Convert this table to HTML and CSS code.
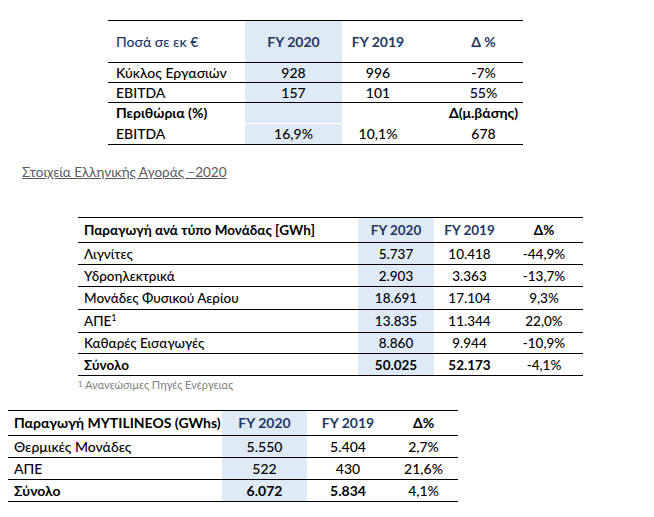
FILE: index.html
```html
<!DOCTYPE html>
<html lang="el">
<head>
<meta charset="utf-8">
<title>Στοιχεία</title>
<link rel="stylesheet" href="styles.css">
</head>
<body>
<div class="page">
  <table class="tbl t1">
    <colgroup>
      <col class="t1-c0"><col class="t1-c1"><col class="t1-c2"><col class="t1-c3">
    </colgroup>
    <tr class="head">
      <td class="lbl navy">Ποσά σε εκ €</td>
      <td class="shade num navy b">FY 2020</td>
      <td class="num navy b">FY 2019</td>
      <td class="num d navy b">Δ %</td>
    </tr>
    <tr class="row r19 line">
      <td class="lbl">Κύκλος Εργασιών</td>
      <td class="shade num">928</td>
      <td class="num">996</td>
      <td class="num d">-7%</td>
    </tr>
    <tr class="row r19 line">
      <td class="lbl">EBITDA</td>
      <td class="shade num">157</td>
      <td class="num">101</td>
      <td class="num d">55%</td>
    </tr>
    <tr class="row line">
      <td class="lbl b">Περιθώρια (%)</td>
      <td class="shade num"></td>
      <td class="num"></td>
      <td class="num d b">Δ(μ.βάσης)</td>
    </tr>
    <tr class="row wline">
      <td class="lbl">EBITDA</td>
      <td class="shade num">16,9%</td>
      <td class="num">10,1%</td>
      <td class="num d">678</td>
    </tr>
  </table>

  <p class="section-title">Στοιχεία Ελληνικής Αγοράς –2020</p>

  <table class="tbl t2">
    <colgroup>
      <col class="t2-c0"><col class="t2-c1"><col class="t2-c2"><col class="t2-c3">
    </colgroup>
    <tr class="head">
      <td class="lbl b">Παραγωγή ανά τύπο Μονάδας [GWh]</td>
      <td class="shade num navy b">FY 2020</td>
      <td class="num navy b">FY 2019</td>
      <td class="num b">Δ%</td>
    </tr>
    <tr class="row line">
      <td class="lbl">Λιγνίτες</td>
      <td class="shade num">5.737</td>
      <td class="num">10.418</td>
      <td class="num">-44,9%</td>
    </tr>
    <tr class="row line">
      <td class="lbl">Υδροηλεκτρικά</td>
      <td class="shade num">2.903</td>
      <td class="num">3.363</td>
      <td class="num">-13,7%</td>
    </tr>
    <tr class="row tall line">
      <td class="lbl">Μονάδες Φυσικού Αερίου</td>
      <td class="shade num">18.691</td>
      <td class="num">17.104</td>
      <td class="num">9,3%</td>
    </tr>
    <tr class="row tall line">
      <td class="lbl">ΑΠΕ<sup class="sup">1</sup></td>
      <td class="shade num">13.835</td>
      <td class="num">11.344</td>
      <td class="num">22,0%</td>
    </tr>
    <tr class="row short line">
      <td class="lbl">Καθαρές Εισαγωγές</td>
      <td class="shade num">8.860</td>
      <td class="num">9.944</td>
      <td class="num">-10,9%</td>
    </tr>
    <tr class="row line">
      <td class="lbl b">Σύνολο</td>
      <td class="shade num b">50.025</td>
      <td class="num b">52.173</td>
      <td class="num">-4,1%</td>
    </tr>
  </table>
  <p class="footnote"><span class="fn-mark">1</span> Ανανεώσιμες Πηγές Ενέργειας</p>

  <table class="tbl t3">
    <colgroup>
      <col class="t3-c0"><col class="t3-c1"><col class="t3-c2"><col class="t3-c3">
    </colgroup>
    <tr class="head">
      <td class="lbl b">Παραγωγή MYTILINEOS (GWhs)</td>
      <td class="shade num navy b">FY 2020</td>
      <td class="num navy b">FY 2019</td>
      <td class="num b">Δ%</td>
    </tr>
    <tr class="row line">
      <td class="lbl">Θερμικές Μονάδες</td>
      <td class="shade num">5.550</td>
      <td class="num">5.404</td>
      <td class="num">2,7%</td>
    </tr>
    <tr class="row line">
      <td class="lbl">ΑΠΕ</td>
      <td class="shade num">522</td>
      <td class="num">430</td>
      <td class="num">21,6%</td>
    </tr>
    <tr class="row line">
      <td class="lbl b">Σύνολο</td>
      <td class="shade num b">6.072</td>
      <td class="num b">5.834</td>
      <td class="num">4,1%</td>
    </tr>
  </table>
</div>
</body>
</html>
```

FILE: styles.css
```css
html, body {
  margin: 0;
  padding: 0;
  background: #ffffff;
}

body {
  font-family: Lato, "Open Sans", "Noto Sans", sans-serif;
  font-size: 14px;
  font-weight: 500;
  color: #000000;
}

.page {
  display: flex;
  flex-direction: column;
  align-items: flex-start;
  padding-top: 20px;
}

.tbl {
  border-collapse: collapse;
  table-layout: fixed;
  border-top: 1px solid #000;
  border-bottom: 1px solid #000;
}

.tbl td {
  padding: 0;
  white-space: nowrap;
  overflow: visible;
  line-height: 16px;
}

.tbl tr.line td {
  border-top: 1px solid #000;
}

.tbl tr.wline td {
  border-top: 1px solid #ffffff;
}

.lbl {
  text-align: left;
  padding-left: 8px !important;
}

.num {
  text-align: center;
}

.b {
  font-weight: 700;
}

.navy {
  color: #1f3864;
}

.shade {
  background: #deeaf6;
}

.sup {
  font-size: 9px;
  vertical-align: 5px;
  line-height: 0;
}

/* Table 1 */
.t1 {
  margin-left: 108px;
  width: 415px;
}
.t1-c0 { width: 137px; }
.t1-c1 { width: 97px; }
.t1-c2 { width: 72px; }
.t1-c3 { width: 109px; }
.t1 .d { padding-left: 30px; }
.t1 .head td { height: 41px; }
.t1 .row td { height: 20px; }
.t1 .row.r19 td { height: 19px; }

/* Section title */
.section-title {
  margin: 18px 0 0 22px;
  font-size: 13.5px;
  font-weight: 400;
  color: #595959;
  text-decoration: underline;
  line-height: 18px;
}

/* Table 2 */
.t2 {
  margin-top: 36px;
  margin-left: 78px;
  width: 505px;
  font-size: 13.5px;
}
.t2 .lbl { padding-left: 6px !important; }
.t2-c0 { width: 280px; }
.t2-c1 { width: 76px; }
.t2-c2 { width: 71px; }
.t2-c3 { width: 78px; }
.t2 .head td { height: 24px; }
.t2 .row td { height: 21px; }
.t2 .row.tall td { height: 22px; }
.t2 .row.short td { height: 20px; }

.footnote {
  margin: 2px 0 0 78px;
  font-size: 11px;
  font-weight: 400;
  color: #7f7f7f;
  line-height: 13px;
}
.fn-mark {
  font-size: 8px;
  vertical-align: 2px;
}

/* Table 3 */
.t3 {
  margin-top: 19px;
  margin-left: 8px;
  width: 450px;
}
.t3 .lbl { padding-left: 6px !important; }
.t3-c0 { width: 214px; }
.t3-c1 { width: 85px; }
.t3-c2 { width: 82px; }
.t3-c3 { width: 69px; }
.t3 .head td { height: 24px; }
.t3 .row td { height: 21px; }
```
